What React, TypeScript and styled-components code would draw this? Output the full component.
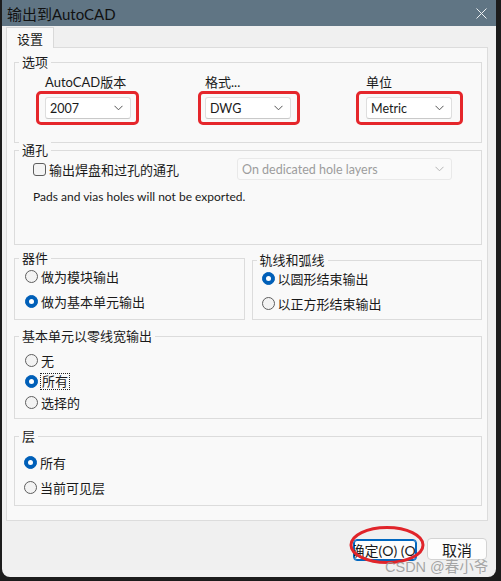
import React from "react";
import styled, { createGlobalStyle } from "styled-components";

const Global = createGlobalStyle`
  html, body { margin: 0; padding: 0; background: #1c1c1c; }
  body {
    font-family: Lato, "Noto Sans CJK SC", sans-serif;
    font-size: 12.5px;
    color: #1a1a1a;
  }
  * { box-sizing: border-box; }
`;

const Screen = styled.div`
  position: relative;
  width: 501px;
  height: 581px;
  overflow: hidden;
  background: #1c1c1c;
`;

const Window = styled.div`
  width: 494px;
  height: 577px;
  margin-left: 2px;
  background: #f0f0f0;
  border-radius: 0 0 8px 8px;
  display: flex;
  flex-direction: column;
  overflow: hidden;
`;

const TitleBar = styled.div`
  height: 26px;
  flex: none;
  background: #607584;
  display: flex;
  align-items: center;
  justify-content: space-between;
  padding: 0 9px 0 5px;
  font-size: 15px;
  color: #111;
`;

const Body = styled.div`
  flex: 1;
  display: flex;
  flex-direction: column;
  padding: 1px 8px 0 4px;
`;

const TabStrip = styled.div`
  display: flex;
  height: 20px;
`;

const Tab = styled.div`
  width: 48px;
  height: 21px;
  background: #f9f9f9;
  border: 1px solid #d9d9d9;
  border-bottom: none;
  display: flex;
  align-items: center;
  justify-content: center;
  position: relative;
  z-index: 1;
  font-size: 13px;
`;

const Panel = styled.div`
  height: 474px;
  background: #f9f9f9;
  border: 1px solid #dcdcdc;
  padding: 0 5px 0 7px;
  display: flex;
  flex-direction: column;
`;

const Group = styled.div<{ $h: number; $mt: number }>`
  height: ${(p) => p.$h}px;
  margin-top: ${(p) => p.$mt}px;
  border: 1px solid #dcdcdc;
  display: flex;
  flex-direction: column;
`;

const Legend = styled.div`
  align-self: flex-start;
  margin: -9px 0 0 4px;
  padding: 0 3px;
  line-height: 16px;
  background: #f9f9f9;
  font-size: 13px;
`;

const OptionGrid = styled.div`
  display: grid;
  grid-template-columns: 162px 158px auto;
  padding-left: 21px;
  margin-top: 4px;
`;

const OptionCol = styled.div`
  display: flex;
  flex-direction: column;
  align-items: flex-start;
`;

const FieldLabel = styled.div<{ $pl: number }>`
  line-height: 16px;
  padding-left: ${(p) => p.$pl}px;
  margin-bottom: 1px;
  font-size: 13px;
`;

const RedBox = styled.div<{ $pl: number; $w: number }>`
  width: ${(p) => p.$w}px;
  border: 3px solid #e5262b;
  border-radius: 5px;
  padding: 3px 0 3px ${(p) => p.$pl}px;
`;

const Select = styled.div<{ $w: number; $disabled?: boolean }>`
  width: ${(p) => p.$w}px;
  height: 22px;
  background: ${(p) => (p.$disabled ? "#fafafa" : "#ffffff")};
  border: 1px solid ${(p) => (p.$disabled ? "#e9e9e9" : "#dedede")};
  border-bottom-color: ${(p) => (p.$disabled ? "#e9e9e9" : "#c9c9c9")};
  border-radius: 3px;
  display: flex;
  align-items: center;
  justify-content: space-between;
  padding: 0 7px 0 4px;
  color: ${(p) => (p.$disabled ? "#9d9d9d" : "#1a1a1a")};
`;

const Chevron = ({ color = "#555" }: { color?: string }) => (
  <svg width="9" height="6" viewBox="0 0 9 6">
    <path d="M0.5 0.8 L4.5 4.8 L8.5 0.8" fill="none" stroke={color} strokeWidth="1" />
  </svg>
);

const HoleRow = styled.div`
  display: grid;
  grid-template-columns: 204px auto;
  align-items: center;
  padding-left: 18px;
  height: 22px;
`;

const CheckLine = styled.label`
  display: flex;
  align-items: center;
  gap: 3px;
  font-size: 13px;
`;

const CheckBox = styled.span`
  width: 13px;
  height: 13px;
  border: 1px solid #5e5e5e;
  border-radius: 3px;
  background: #f4f4f4;
  flex: none;
`;

const Note = styled.div`
  margin-top: 9px;
  padding-left: 18px;
  line-height: 16px;
  font-size: 12px;
`;

const PairRow = styled.div`
  display: grid;
  grid-template-columns: 1fr 1fr;
  column-gap: 7px;
  align-items: end;
  margin-top: 13px;
`;

const RadioList = styled.div<{ $pl: number; $mt: number; $gap: number; $lh: number }>`
  display: flex;
  flex-direction: column;
  padding-left: ${(p) => p.$pl}px;
  margin-top: ${(p) => p.$mt}px;
  gap: ${(p) => p.$gap}px;
  & > * { height: ${(p) => p.$lh}px; }
`;

const RadioLine = styled.div`
  display: flex;
  align-items: center;
  gap: 3px;
  font-size: 13px;
`;

const RadioDot = styled.span<{ $on?: boolean }>`
  width: 13px;
  height: 13px;
  border-radius: 50%;
  flex: none;
  position: relative;
  background: ${(p) => (p.$on ? "#005fb8" : "#f3f3f3")};
  border: 1px solid ${(p) => (p.$on ? "#005fb8" : "#5e5e5e")};
  &::after {
    content: "";
    display: ${(p) => (p.$on ? "block" : "none")};
    position: absolute;
    left: 3px;
    top: 3px;
    width: 5px;
    height: 5px;
    border-radius: 50%;
    background: #ffffff;
  }
`;

const Focused = styled.span`
  outline: 1px dotted #222;
  outline-offset: 0;
  padding: 0 1px;
  line-height: 15px;
`;

const Footer = styled.div`
  flex: 1;
  display: flex;
  justify-content: flex-end;
  align-items: flex-start;
  gap: 10px;
  padding-top: 17px;
  padding-right: 1px;
`;

const Button = styled.div<{ $primary?: boolean; $w: number }>`
  width: ${(p) => p.$w}px;
  height: 22px;
  border-radius: 4px;
  background: #fdfdfd;
  border: 1px solid ${(p) => (p.$primary ? "#0067c0" : "#d3d3d3")};
  box-shadow: ${(p) => (p.$primary ? "inset 0 0 0 1px #0067c0" : "none")};
  display: flex;
  align-items: center;
  justify-content: center;
  overflow: hidden;
  white-space: nowrap;
  font-size: ${(p) => (p.$primary ? 14 : 15)}px;
  margin-top: ${(p) => (p.$primary ? 1 : 0)}px;
`;

const Ellipse = styled.svg`
  position: absolute;
  left: 348px;
  top: 525px;
`;

const Watermark = styled.div`
  position: absolute;
  left: 385px;
  top: 555px;
  font-size: 14.5px;
  color: rgba(150, 150, 150, 0.85);
  white-space: nowrap;
  font-family: "Liberation Sans", "Noto Sans CJK SC", sans-serif;
`;

export default function App() {
  return (
    <Screen>
      <Global />
      <Window>
        <TitleBar>
          <span>输出到AutoCAD</span>
          <svg width="11" height="11" viewBox="0 0 11 11">
            <path d="M0.5 0.5 L10.5 10.5 M10.5 0.5 L0.5 10.5" stroke="#eef1f3" strokeWidth="1" />
          </svg>
        </TitleBar>
        <Body>
          <TabStrip>
            <Tab>设置</Tab>
          </TabStrip>
          <Panel>
            <Group $h={81} $mt={14}>
              <Legend>选项</Legend>
              <OptionGrid>
                <OptionCol>
                  <FieldLabel $pl={9}>AutoCAD版本</FieldLabel>
                  <RedBox $pl={6} $w={103}>
                    <Select $w={86}>
                      <span>2007</span>
                      <Chevron />
                    </Select>
                  </RedBox>
                </OptionCol>
                <OptionCol>
                  <FieldLabel $pl={7}>格式...</FieldLabel>
                  <RedBox $pl={4} $w={102}>
                    <Select $w={86}>
                      <span>DWG</span>
                      <Chevron />
                    </Select>
                  </RedBox>
                </OptionCol>
                <OptionCol>
                  <FieldLabel $pl={10}>单位</FieldLabel>
                  <RedBox $pl={7} $w={107}>
                    <Select $w={86}>
                      <span>Metric</span>
                      <Chevron />
                    </Select>
                  </RedBox>
                </OptionCol>
              </OptionGrid>
            </Group>

            <Group $h={95} $mt={7}>
              <Legend>通孔</Legend>
              <HoleRow>
                <CheckLine>
                  <CheckBox />
                  输出焊盘和过孔的通孔
                </CheckLine>
                <Select $w={215} $disabled>
                  <span>On dedicated hole layers</span>
                  <Chevron color="#b5b5b5" />
                </Select>
              </HoleRow>
              <Note>Pads and vias holes will not be exported.</Note>
            </Group>

            <PairRow>
              <Group $h={62} $mt={0}>
                <Legend>器件</Legend>
                <RadioList $pl={10} $mt={0} $gap={5} $lh={20}>
                  <RadioLine>
                    <RadioDot />
                    做为模块输出
                  </RadioLine>
                  <RadioLine>
                    <RadioDot $on />
                    做为基本单元输出
                  </RadioLine>
                </RadioList>
              </Group>
              <Group $h={60} $mt={0}>
                <Legend>轨线和弧线</Legend>
                <RadioList $pl={9} $mt={0} $gap={5} $lh={20}>
                  <RadioLine>
                    <RadioDot $on />
                    以圆形结束输出
                  </RadioLine>
                  <RadioLine>
                    <RadioDot />
                    以正方形结束输出
                  </RadioLine>
                </RadioList>
              </Group>
            </PairRow>

            <Group $h={83} $mt={16}>
              <Legend>基本单元以零线宽输出</Legend>
              <RadioList $pl={10} $mt={6} $gap={0} $lh={21}>
                <RadioLine>
                  <RadioDot />
                  无
                </RadioLine>
                <RadioLine>
                  <RadioDot $on />
                  <Focused>所有</Focused>
                </RadioLine>
                <RadioLine>
                  <RadioDot />
                  选择的
                </RadioLine>
              </RadioList>
            </Group>

            <Group $h={70} $mt={17}>
              <Legend>层</Legend>
              <RadioList $pl={9} $mt={8} $gap={5} $lh={20}>
                <RadioLine>
                  <RadioDot $on />
                  所有
                </RadioLine>
                <RadioLine>
                  <RadioDot />
                  当前可见层
                </RadioLine>
              </RadioList>
            </Group>
          </Panel>
          <Footer>
            <Button $primary $w={64}>确定(O) (O)</Button>
            <Button $w={60}>取消</Button>
          </Footer>
        </Body>
      </Window>
      <Ellipse width="78" height="40" viewBox="0 0 78 40">
        <ellipse cx="39" cy="20" rx="36" ry="17.5" fill="none" stroke="#e0242a" strokeWidth="3" />
      </Ellipse>
      <Watermark>CSDN @春小爷</Watermark>
    </Screen>
  );
}
